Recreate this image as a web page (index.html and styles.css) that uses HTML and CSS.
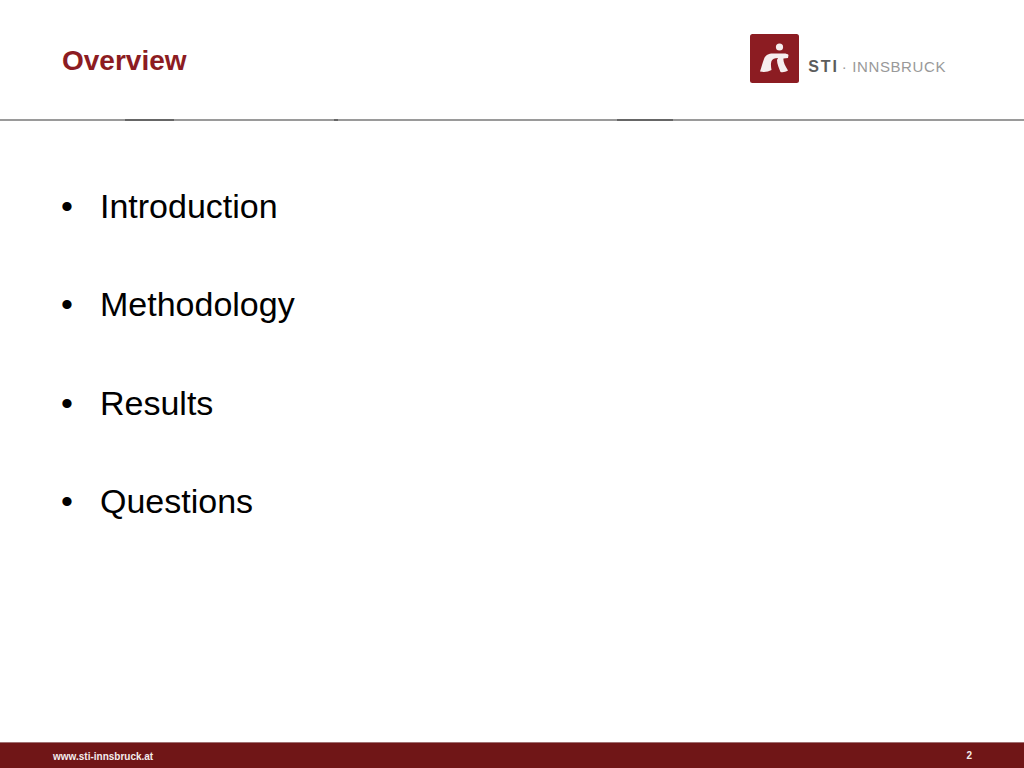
FILE: index.html
```html
<!DOCTYPE html>
<html lang="en">
<head>
<meta charset="utf-8">
<title>Overview</title>
<link rel="stylesheet" href="styles.css">
</head>
<body>
<div class="slide">
  <header class="header">
    <h1 class="title">Overview</h1>
    <div class="logo">
      <svg class="logo-mark" width="49" height="49" viewBox="0 0 49 49" aria-hidden="true">
        <rect width="49" height="49" rx="2.5" fill="#8c1c22"/>
        <circle cx="29.5" cy="13" r="3.6" fill="#f6eeee"/>
        <path d="M10 37.5 C11.5 33 12.5 29 14 25 C15.5 21 18.5 19.5 23 19.5 L34 19.5 C36 19.5 38 20 38.5 21 L38 24 L33.5 24.5 C33 27 34.5 31 38 36.5 C35.5 38 33 38.5 30.5 38 C29 34 27 30 27 26 L28 24 C24.5 24 22.5 25 21.5 27 C20.5 30 21 33 21.5 36 C18 38 14 38.5 10 37.5 Z" fill="#f6eeee"/>
      </svg>
      <div class="logo-text"><span class="logo-sti">STI</span><span class="logo-dot">·</span><span class="logo-city">INNSBRUCK</span></div>
    </div>
  </header>
  <div class="rule">
    <span class="rule-seg rule-a"></span>
    <span class="rule-seg rule-b"></span>
    <span class="rule-seg rule-c"></span>
  </div>
  <main class="content">
    <ul class="items">
      <li class="item">Introduction</li>
      <li class="item">Methodology</li>
      <li class="item">Results</li>
      <li class="item">Questions</li>
    </ul>
  </main>
  <footer class="footer">
    <span class="site">www.sti-innsbruck.at</span>
    <span class="page">2</span>
  </footer>
</div>
</body>
</html>
```
FILE: styles.css
```css
html, body {
  margin: 0;
  padding: 0;
  background: #ffffff;
}

.slide {
  width: 1024px;
  height: 768px;
  display: flex;
  flex-direction: column;
  overflow: hidden;
  font-family: "Liberation Sans", Arial, sans-serif;
}

.header {
  height: 119px;
  flex: none;
  display: flex;
  justify-content: space-between;
  box-sizing: border-box;
  padding: 0 78px 0 62px;
}

.title {
  margin: 45px 0 0;
  font-size: 28px;
  line-height: 32px;
  font-weight: 700;
  color: #8c1c22;
}

.logo {
  display: flex;
  align-items: flex-end;
  gap: 9px;
  margin-top: 34px;
  height: 49px;
}

.logo-mark {
  display: block;
  flex: none;
}

.logo-text {
  display: flex;
  align-items: center;
  height: 16px;
  margin-bottom: 8px;
  font-size: 15px;
  line-height: 16px;
  color: #999999;
  letter-spacing: 0.6px;
  white-space: nowrap;
}

.logo-sti {
  font-size: 16px;
  font-weight: 700;
  color: #5c5c5c;
  letter-spacing: 1.8px;
}

.logo-dot {
  margin: 0 5px 0 3px;
}

.rule {
  height: 2px;
  flex: none;
  display: flex;
  background: #9a9a9a;
}

.rule-seg {
  display: block;
  height: 2px;
  background: #666666;
}

.rule-a {
  width: 49px;
  margin-left: 125px;
}

.rule-b {
  width: 4px;
  margin-left: 160px;
}

.rule-c {
  width: 56px;
  margin-left: 279px;
}

.content {
  flex: 1;
  min-height: 0;
}

.items {
  list-style: none;
  margin: 0;
  padding: 64px 0 0 60px;
}

.item {
  position: relative;
  padding-left: 40px;
  font-size: 34px;
  line-height: 42px;
  margin-bottom: 56.4px;
  color: #000000;
}

.item::before {
  content: "•";
  position: absolute;
  left: 1px;
}

.footer {
  height: 26px;
  flex: none;
  display: flex;
  justify-content: space-between;
  box-sizing: border-box;
  padding: 0 52px 0 53px;
  background: #701617;
  border-top: 1px solid #a07072;
  color: #f4ecec;
  font-size: 10px;
  font-weight: 700;
}

.site {
  line-height: 28px;
}

.page {
  line-height: 26px;
}
```
